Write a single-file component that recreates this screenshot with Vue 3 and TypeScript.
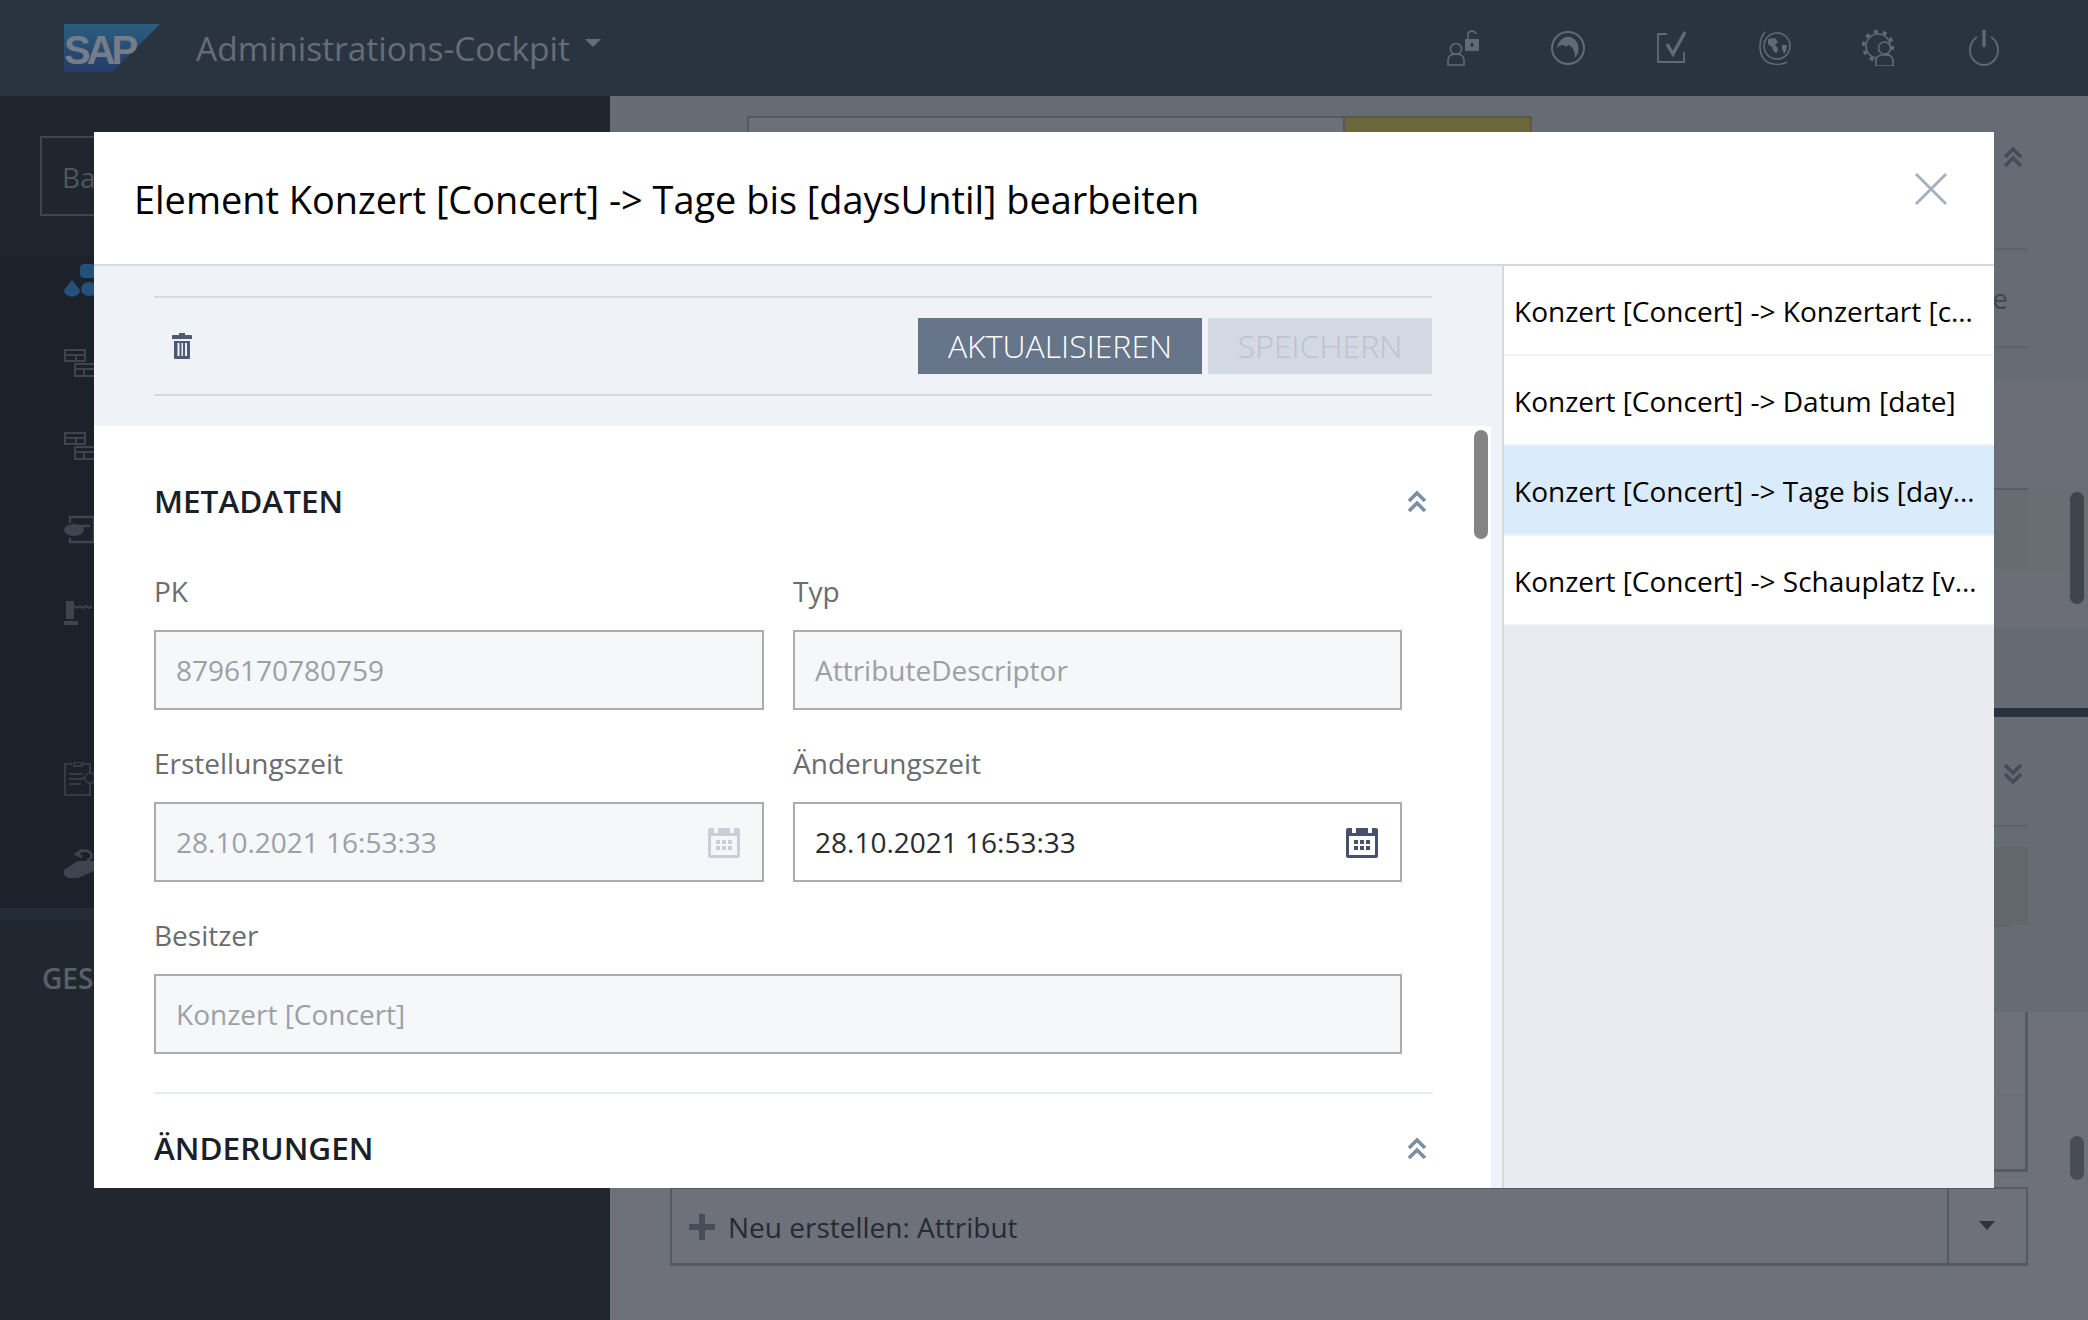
<script setup lang="ts">
import { ref } from 'vue'

interface ListItem {
    id: number,
    name: string,
}

const items = ref<ListItem[]>([
    { id: 1, name: 'Konzert [Concert] -> Konzertart [concertType]' },
    { id: 2, name: 'Konzert [Concert] -> Datum [date]' },
    { id: 3, name: 'Konzert [Concert] -> Tage bis [daysUntil]' },
    { id: 4, name: 'Konzert [Concert] -> Schauplatz [venue]' }
])
const activeId = ref(3)
</script>

<template>
    <div class="page">
        <header class="topbar">
            <div class="logo">SAP</div>
            <div class="app-title">Administrations-Cockpit</div>
            <span class="title-caret"></span>
            <nav class="top-icons">
                <div class="top-icon">
                    <svg width="36" height="36" viewBox="0 0 36 36" fill="none" stroke="#5f6a77" stroke-width="1.6">
                        <circle cx="10" cy="19" r="5.500" />
                        <path d="M2 35v-4c0-5 3-7 8-7s8 2 8 7v4z" />
                        <rect x="19" y="9" width="14" height="12" fill="#5f6a77" stroke="none" rx="1" />
                        <path d="M22 9V5c0-5 7-5 8-1" />
                        <path d="M26 13v4" stroke="#2a3441" stroke-width="2.400" />
                    </svg>
                </div>
                <div class="top-icon">
                    <svg width="36" height="36" viewBox="0 0 36 36" fill="none" stroke="#5f6a77" stroke-width="2">
                        <circle cx="18" cy="18" r="16" />
                        <path d="M7 18c1-7 7-12 13-11 6 1 10 8 8 16l-3 5c0-6-2-12-7-13-1 2-2 2-3 1-2-2-5-1-8 2z" fill="#5f6a77" stroke="none" />
                    </svg>
                </div>
                <div class="top-icon">
                    <svg width="36" height="36" viewBox="0 0 36 36" fill="none" stroke="#5f6a77" stroke-width="1.800">
                        <path d="M13 4H4v28h26v-10" />
                        <path d="M13 14l6 10L31 2" stroke-width="3.400" />
                    </svg>
                </div>
                <div class="top-icon">
                    <svg width="36" height="36" viewBox="0 0 36 36" fill="none" stroke="#5f6a77" stroke-width="1.600">
                        <path d="M7 2C0 10 0 26 9 32c6 3 14 3 20 0" />
                        <circle cx="19" cy="16" r="13" />
                        <path d="M10 9l7-1 3 4-3 3 3 3-1 5-3-1-2-5-4-3zM24 15h5l-1 6-2 3-2-5z" fill="#5f6a77" stroke="none" />
                    </svg>
                </div>
                <div class="top-icon">
                    <svg width="36" height="36" viewBox="0 0 36 36" fill="none" stroke="#5f6a77" stroke-width="1.600">
                        <circle cx="16" cy="16" r="12" />
                        <circle cx="16" cy="16" r="14.500" stroke-width="3.400" stroke-dasharray="4 5.100" />
                        <path d="M14 36v-5c0-4 3-6 7-6h3c4 0 7 2 7 6v5z" fill="#2a3441" />
                        <circle cx="22.500" cy="18" r="6" fill="#2a3441" />
                    </svg>
                </div>
                <div class="top-icon">
                    <svg width="36" height="36" viewBox="0 0 36 36" fill="none" stroke="#5f6a77" stroke-width="1.800">
                        <path d="M11 7a14 15 0 1 0 14 0" />
                        <path d="M18 0v17" stroke-width="3.200" />
                    </svg>
                </div>
            </nav>
        </header>

        <div class="workspace">
            <aside class="sidebar">
                <div class="side-search">
                    <div class="side-input">Baum durchsuchen</div>
                </div>
                <ul class="side-nav">
                    <li>
                        <svg width="32" height="34" viewBox="0 0 32 34" fill="#24507a">
                            <rect x="16" y="0" width="16" height="14" rx="4" />
                            <path d="M8 16l8 10a7 6 0 0 1-16 0z" />
                            <ellipse cx="25" cy="25" rx="8" ry="7" />
                        </svg>
                    </li>
                    <li>
                        <svg width="32" height="30" viewBox="0 0 32 30" fill="none" stroke="#3d454f" stroke-width="2">
                            <path d="M1 1h20v11H1zM1 6h20M12 6v6M11 15h20v12H11zM11 20h20M20 20v7" />
                        </svg>
                    </li>
                    <li>
                        <svg width="32" height="30" viewBox="0 0 32 30" fill="none" stroke="#3d454f" stroke-width="2">
                            <path d="M1 1h20v11H1zM1 6h20M12 6v6M11 15h20v12H11zM11 20h20M20 20v7" />
                        </svg>
                    </li>
                    <li>
                        <svg width="32" height="30" viewBox="0 0 32 30" fill="none" stroke="#3d454f" stroke-width="2.400">
                            <path d="M6 8V2h24v25H6v-4" />
                            <ellipse cx="10" cy="15" rx="10" ry="6" fill="#3d454f" stroke="none" />
                            <path d="M12 11h14" />
                        </svg>
                    </li>
                    <li>
                        <svg width="32" height="24" viewBox="0 0 32 24" fill="none" stroke="#3d454f" stroke-width="2">
                            <rect x="2" y="0" width="8" height="18" fill="#3d454f" stroke="none" />
                            <path d="M0 22h14" stroke-width="4" />
                            <path d="M10 5l3 2 3-2 3 2 3-2 3 2 3-2" />
                        </svg>
                    </li>
                    <li class="side-gap"></li>
                    <li>
                        <svg width="34" height="34" viewBox="0 0 34 34" fill="none" stroke="#343c46" stroke-width="2">
                            <path d="M8 2H1v31h25v-8M18 2h8v6" />
                            <path d="M10 0h8v4h-8zM5 12h14M5 17h14M5 22h12" />
                            <circle cx="26" cy="16" r="5" />
                            <path d="M26 7v4M26 21v4M17 16h4M31 16h3" />
                        </svg>
                    </li>
                    <li>
                        <svg width="32" height="32" viewBox="0 0 32 32" fill="#3d454f" stroke="#3d454f" stroke-width="2">
                            <path d="M0 25l14-9 18 0v7l-18 8c-8 1-14 0-14-6z" />
                            <path d="M14 8a7 5 0 1 1 10 6v3M18 4l-6 4 6 3" stroke-width="2.600" fill="none" />
                        </svg>
                    </li>
                </ul>
                <div class="side-strip"></div>
                <div class="side-group">GESCHÄFTSOBJEKTE</div>
            </aside>

            <main class="main">
                <section class="pane pane-top">
                    <div class="row row-head">
                        <div class="search-field"></div>
                        <div class="search-btn"></div>
                        <svg class="bg-chevron" width="20" height="22" viewBox="0 0 20 22" fill="none" stroke="#434b56" stroke-width="3.400">
                            <path d="M2 11l8-8 8 8M2 20l8-8 8 8" />
                        </svg>
                    </div>
                    <div class="row row-text"><span>Attribute</span></div>
                    <div class="pane-gap"></div>
                    <div class="stripe stripe-light"></div>
                    <div class="stripe stripe-dim"></div>
                    <div class="stripe stripe-light2"></div>
                    <div class="stripe stripe-end"></div>
                </section>
                <section class="pane pane-mid">
                    <div class="row row-head2">
                        <svg class="bg-chevron2" width="20" height="22" viewBox="0 0 20 22" fill="none" stroke="#434b56" stroke-width="3.400">
                            <path d="M2 2l8 8 8-8M2 11l8 8 8-8" />
                        </svg>
                    </div>
                    <div class="row row-grey"></div>
                </section>
                <section class="pane pane-bottom">
                    <div class="attr-table">
                        <div class="attr-row"></div>
                        <div class="attr-row"></div>
                    </div>
                    <div class="create-box">
                        <svg class="plus" width="26" height="26" viewBox="0 0 26 26" fill="#464e5a">
                            <path d="M10 0h6v10h10v6H16v10h-6V16H0v-6h10z" />
                        </svg>
                        <span class="create-text">Neu erstellen: Attribut</span>
                        <div class="create-arrow"></div>
                    </div>
                </section>
                <div class="bg-scroll bg-scroll-a"></div>
                <div class="bg-scroll bg-scroll-b"></div>
            </main>
        </div>

        <div class="modal">
            <div class="modal-head">
                <h2 class="modal-title">Element Konzert [Concert] -&gt; Tage bis [daysUntil] bearbeiten</h2>
                <svg class="close" width="32" height="32" viewBox="0 0 32 32" fill="none" stroke="#a4b0bf" stroke-width="2.800">
                    <path d="M1 1l30 30M31 1L1 31" />
                </svg>
            </div>
            <div class="modal-body">
                <div class="editor">
                    <div class="actions">
                        <div class="action-row">
                            <svg class="trash" width="20" height="26" viewBox="0 0 20 26" fill="#4d5875">
                                <path d="M7 0h6v2h6a1 1 0 0 1 1 1v3H0V3a1 1 0 0 1 1-1h6z" />
                                <path d="M2 8h16v17a1 1 0 0 1-1 1H3a1 1 0 0 1-1-1zm3.500 2v13h2V10zm4 0v13h1.500V10zm3.500 0v13h2V10z" fill-rule="evenodd" />
                            </svg>
                            <button class="btn btn-primary" type="button">AKTUALISIEREN</button>
                            <button class="btn btn-disabled" type="button">SPEICHERN</button>
                        </div>
                    </div>
                    <div class="form-scroll">
                        <div class="form-inner">
                            <div class="section-head section-first">
                                <h3>METADATEN</h3>
                                <svg width="20" height="23" viewBox="0 0 20 23" fill="none" stroke="#7d8fa5" stroke-width="3.600">
                                    <path d="M2 11l8-8 8 8M2 21l8-8 8 8" />
                                </svg>
                            </div>
                            <div class="fields">
                                <div class="field">
                                    <label>PK</label>
                                    <div class="input disabled">8796170780759</div>
                                </div>
                                <div class="field">
                                    <label>Typ</label>
                                    <div class="input disabled">AttributeDescriptor</div>
                                </div>
                                <div class="field">
                                    <label>Erstellungszeit</label>
                                    <div class="input disabled">
                                        28.10.2021 16:53:33
                                        <svg class="cal" width="32" height="32" viewBox="0 0 32 32">
                                            <path d="M2 2h4v5h4V2h12v5h4V2h4a2 2 0 0 1 2 2v26a2 2 0 0 1-2 2H2a2 2 0 0 1-2-2V4a2 2 0 0 1 2-2z" fill="#c9ced8" />
                                            <rect x="3" y="10" width="26" height="19" fill="#f6f7f9" />
                                            <path d="M8 14h4v4H8zM14 14h4v4h-4zM20 14h4v4h-4zM8 20h4v4H8zM14 20h4v4h-4zM20 20h4v4h-4z" fill="#c9ced8" />
                                        </svg>
                                    </div>
                                </div>
                                <div class="field">
                                    <label>Änderungszeit</label>
                                    <div class="input">
                                        28.10.2021 16:53:33
                                        <svg class="cal" width="32" height="32" viewBox="0 0 32 32">
                                            <path d="M2 2h4v5h4V2h12v5h4V2h4a2 2 0 0 1 2 2v26a2 2 0 0 1-2 2H2a2 2 0 0 1-2-2V4a2 2 0 0 1 2-2z" fill="#46516f" />
                                            <rect x="3" y="10" width="26" height="19" fill="#fff" />
                                            <path d="M8 14h4v4H8zM14 14h4v4h-4zM20 14h4v4h-4zM8 20h4v4H8zM14 20h4v4h-4zM20 20h4v4h-4z" fill="#46516f" />
                                        </svg>
                                    </div>
                                </div>
                                <div class="field field-wide">
                                    <label>Besitzer</label>
                                    <div class="input disabled">Konzert [Concert]</div>
                                </div>
                            </div>
                            <div class="section-head section-second">
                                <h3>ÄNDERUNGEN</h3>
                                <svg width="20" height="23" viewBox="0 0 20 23" fill="none" stroke="#7d8fa5" stroke-width="3.600">
                                    <path d="M2 11l8-8 8 8M2 21l8-8 8 8" />
                                </svg>
                            </div>
                        </div>
                        <div class="scroll-thumb"></div>
                    </div>
                </div>
                <ul class="element-list">
                    <li v-for="item in items" :key="item.id" :class="{ active: item.id === activeId }">
                        {{ item.name }}
                    </li>
                </ul>
            </div>
        </div>
    </div>
</template>

<style>
html,
body {
    margin: 0;
    overflow: hidden;
}
</style>

<style scoped>
* {
    box-sizing: border-box;
}

.page {
    position: relative;
    width: 2088px;
    height: 1320px;
    overflow: hidden;
    display: flex;
    flex-direction: column;
    font-family: "Open Sans", "Noto Sans", sans-serif;
    background: #656c74;
}

.topbar {
    height: 96px;
    flex: none;
    display: flex;
    align-items: center;
    padding-left: 64px;
    background: #2a3441;
}

.logo {
    position: relative;
    z-index: 0;
    width: 96px;
    height: 48px;
    color: #757d88;
    font: bold 40px/52px "Liberation Sans", sans-serif;
    letter-spacing: -4px;
}

.logo::before {
    content: "";
    position: absolute;
    inset: 0;
    z-index: -1;
    clip-path: polygon(0 0, 100% 0, 50% 100%, 0 100%);
    background: linear-gradient(#2b5f80, #273a68);
}

.app-title {
    margin-left: 36px;
    color: #666d76;
    font-size: 33.500px;
}

.title-caret {
    margin: 0 0 10px 15px;
    border-top: 8px solid #666d76;
    border-left: 8px solid transparent;
    border-right: 8px solid transparent;
}

.top-icons {
    margin-left: auto;
    padding-right: 52px;
    display: flex;
}

.top-icon {
    width: 104px;
    height: 36px;
    display: flex;
    justify-content: center;
}

.workspace {
    flex: 1;
    min-height: 0;
    display: flex;
}

.sidebar {
    width: 610px;
    flex: none;
    display: flex;
    flex-direction: column;
    overflow: hidden;
    background: #20272f;
}

.side-search {
    height: 160px;
    flex: none;
    padding: 40px 40px 0;
    background: #1f262e;
}

.side-input {
    height: 80px;
    padding-left: 20px;
    border: 2px solid #3e4650;
    color: #50565e;
    font-size: 28px;
    line-height: 78px;
}

.side-nav {
    height: 652px;
    flex: none;
    margin: 0;
    padding: 0 0 0 64px;
    list-style: none;
    display: flex;
    flex-direction: column;
    gap: 33px;
    background: #1b2229;
}

.side-nav li {
    height: 50px;
    display: flex;
    align-items: center;
}

.side-strip {
    height: 12px;
    flex: none;
    background: #232c37;
}

.side-group {
    padding: 39px 0 0 42px;
    color: #5a6069;
    font-size: 28px;
    font-weight: 600;
    white-space: nowrap;
}

.main {
    position: relative;
    flex: 1;
    min-width: 0;
    display: flex;
    flex-direction: column;
}

.pane-top {
    height: 612px;
    flex: none;
    display: flex;
    flex-direction: column;
    background: #656c74;
}

.row {
    margin-right: 60px;
    flex: none;
}

.row-head {
    height: 154px;
    padding: 20px 5px 0 137px;
    display: flex;
    border-bottom: 2px solid #5d636b;
}

.search-field {
    width: 598px;
    height: 60px;
    border: 2px solid #545961;
    background: #6c7079;
}

.search-btn {
    width: 187px;
    height: 60px;
    border: 2px solid #5a5a42;
    border-left: 0;
    background: #6b673b;
}

.bg-chevron {
    margin: 30px 0 0 auto;
}

.row-text {
    height: 98px;
    display: flex;
    align-items: center;
    justify-content: flex-end;
    padding-right: 20px;
    border-bottom: 2px solid #5d636b;
    color: #3f4650;
    font-size: 28px;
}

.pane-gap {
    height: 32px;
    flex: none;
}

.stripe {
    flex: none;
}

.stripe-light {
    height: 108px;
    background: #6b6e76;
}

.stripe-dim {
    height: 82px;
    margin-right: 60px;
    border-top: 2px solid #595f68;
    background: #666c71;
    box-shadow: 60px 0 0 #696e75;
}

.stripe-light2 {
    height: 58px;
    background: #6b6e76;
}

.stripe-end {
    height: 80px;
    background: #666a72;
}

.pane-mid {
    height: 304px;
    flex: none;
    border-top: 9px solid #28323f;
    background: #666c74;
}

.row-head2 {
    height: 110px;
    padding: 46px 5px 0 0;
    display: flex;
    justify-content: flex-end;
    border-bottom: 2px solid #5d636b;
}

.row-grey {
    height: 78px;
    margin-top: 20px;
    border-bottom: 0;
    background: #62676d;
    box-shadow: 0 20px 0 -18px #5d636b;
}

.pane-bottom {
    flex: 1;
    padding-left: 60px;
    background: #6e7179;
}

.attr-table {
    width: 1358px;
    height: 160px;
    border-right: 3px solid #555962;
    border-bottom: 3px solid #555962;
}

.attr-row {
    height: 83px;
    border-bottom: 1px solid #686b73;
}

.create-box {
    width: 1358px;
    height: 79px;
    margin-top: 15px;
    padding-left: 17px;
    display: flex;
    align-items: center;
    border: 2px solid #555962;
    border-bottom-width: 3px;
}

.plus {
    margin-top: 2px;
}

.create-text {
    margin: 2px 0 0 13px;
    color: #262a32;
    font-size: 28px;
}

.create-arrow {
    width: 79px;
    height: 100%;
    margin-left: auto;
    position: relative;
    border-left: 2px solid #555962;
}

.create-arrow::after {
    content: "";
    position: absolute;
    left: 30px;
    top: 32px;
    border-top: 9px solid #2e323a;
    border-left: 8px solid transparent;
    border-right: 8px solid transparent;
}

.bg-scroll {
    position: absolute;
    left: 1460px;
    width: 14px;
    border-radius: 7px;
}

.bg-scroll-a {
    top: 396px;
    height: 112px;
    background: #3e454d;
}

.bg-scroll-b {
    top: 1040px;
    height: 44px;
    background: #484c55;
}

/* dialog */
.modal {
    position: absolute;
    left: 94px;
    top: 132px;
    width: 1900px;
    height: 1056px;
    display: flex;
    flex-direction: column;
    background: #fff;
}

.modal-head {
    height: 134px;
    flex: none;
    padding: 0 47px 0 40px;
    display: flex;
    align-items: center;
    justify-content: space-between;
    border-bottom: 2px solid #d6d8dd;
}

.modal-title {
    margin: 2px 0 0;
    color: #000;
    font-size: 37.900px;
    font-weight: 400;
}

.close {
    margin-bottom: 19px;
}

.modal-body {
    flex: 1;
    min-height: 0;
    display: flex;
}

.editor {
    flex: 1;
    min-width: 0;
    display: flex;
    flex-direction: column;
    background: #eff2f7;
}

.actions {
    height: 160px;
    flex: none;
    padding: 30px 70px 30px 60px;
}

.action-row {
    height: 100px;
    padding: 0 0 0 18px;
    display: flex;
    align-items: center;
    gap: 6px;
    border-top: 2px solid #d6d8dd;
    border-bottom: 2px solid #d6d8dd;
}

.trash {
    margin-right: auto;
}

.btn {
    height: 56px;
    padding: 0 0 2px;
    border: 0;
    font-family: inherit;
    font-size: 32px;
    font-weight: 300;
}

.btn-primary {
    width: 284px;
    background: #667589;
    color: #fff;
}

.btn-disabled {
    width: 224px;
    background: #d3d9e3;
    color: #bcc2cd;
}

.form-scroll {
    position: relative;
    flex: 1;
    min-height: 0;
    margin-right: 11px;
    background: #fff;
    overflow: hidden;
}

.form-inner {
    padding: 0 58px 0 60px;
}

.section-head {
    display: flex;
    align-items: center;
    justify-content: space-between;
    padding-right: 6px;
}

.section-head h3 {
    margin: 0;
    color: #1a2028;
    font-size: 31.500px;
    font-weight: 600;
}

.section-head svg {
    margin-top: 2px;
}

.section-first {
    height: 74px;
    margin-top: 37px;
}

.section-second {
    height: 108px;
    margin-top: 0;
    border-top: 2px solid #e8ebef;
}

.fields {
    width: 1248px;
    height: 555px;
    padding-top: 40px;
    display: grid;
    grid-template-columns: 610px 609px;
    column-gap: 29px;
    row-gap: 39px;
    align-content: start;
}

.field {
    display: flex;
    flex-direction: column;
}

.field-wide {
    grid-column: 1 / 3;
}

.field label {
    height: 53px;
    color: #6a6d70;
    font-size: 28px;
    line-height: 28px;
}

.input {
    position: relative;
    height: 80px;
    padding-left: 20px;
    display: flex;
    align-items: center;
    border: 2px solid #aaacaf;
    color: #2b2b2b;
    font-size: 28px;
}

.input.disabled {
    background: #f6f7f9;
    color: #9ba0a6;
}

.cal {
    position: absolute;
    right: 22px;
    top: 22px;
}

.scroll-thumb {
    position: absolute;
    top: 4px;
    right: 3px;
    width: 14px;
    height: 109px;
    border-radius: 7px;
    background: #848484;
}

.element-list {
    width: 492px;
    flex: none;
    margin: 0;
    padding: 0;
    list-style: none;
    border-left: 2px solid #d6d8dd;
    background: #e9ebf0;
}

.element-list li {
    height: 90px;
    padding: 0 8px 0 10px;
    border-bottom: 2px solid #f0f1f4;
    background: #fff;
    color: #000;
    font-size: 28px;
    line-height: 90px;
    white-space: nowrap;
    overflow: hidden;
    text-overflow: ellipsis;
}

.element-list li.active {
    background: #daecfb;
}
</style>
